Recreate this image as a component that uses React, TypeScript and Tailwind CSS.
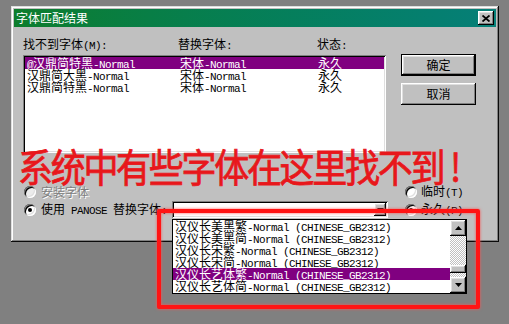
import React from "react";

function Mix({ text, className = "" }: { text: string; className?: string }) {
  const parts = text.match(/[\x00-\x7F]+|[^\x00-\x7F]+/g) || [];
  return (
    <span className={"whitespace-pre " + className}>
      {parts.map((p, i) =>
        /^[\x00-\x7F]+$/.test(p) ? (
          <span key={i} className="font-['Liberation_Mono',monospace] text-[11px] tracking-[-0.6px]">
            {p}
          </span>
        ) : (
          <span key={i}>{p}</span>
        )
      )}
    </span>
  );
}

function Radio({ checked, disabled }: { checked?: boolean; disabled?: boolean }) {
  return (
    <div
      className={
        "relative w-[12px] h-[12px] shrink-0 rounded-full shadow-[inset_1px_1px_#808080,inset_-1px_-1px_#ffffff,inset_2px_2px_#000000,inset_-2px_-2px_#dfdfdf] " +
        (disabled ? "bg-[#ececec]" : "bg-white")
      }
    >
      {checked && <div className="absolute left-[4px] top-[4px] w-[4px] h-[4px] rounded-full bg-black" />}
    </div>
  );
}

function Arrow({ up }: { up?: boolean }) {
  return (
    <svg width="7" height="4" viewBox="0 0 7 4">
      {up ? <polygon points="3.5,0 7,4 0,4" fill="#000" /> : <polygon points="0,0 7,0 3.5,4" fill="#000" />}
    </svg>
  );
}

const raised =
  "bg-[#c0c0c0] shadow-[inset_-1px_-1px_#000000,inset_1px_1px_#ffffff,inset_-2px_-2px_#808080,inset_2px_2px_#dfdfdf]";
const sunken =
  "shadow-[inset_1px_1px_#808080,inset_-1px_-1px_#ffffff,inset_2px_2px_#000000,inset_-2px_-2px_#dfdfdf]";

const listRows = [
  ["@汉鼎简特黑-Normal", "宋体-Normal", "永久"],
  ["汉鼎简大黑-Normal", "宋体-Normal", "永久"],
  ["汉鼎简特黑-Normal", "宋体-Normal", "永久"],
];

const dropItems = [
  "汉仪长美黑繁-Normal (CHINESE_GB2312)",
  "汉仪长美黑简-Normal (CHINESE_GB2312)",
  "汉仪长宋繁-Normal (CHINESE_GB2312)",
  "汉仪长宋简-Normal (CHINESE_GB2312)",
  "汉仪长艺体繁-Normal (CHINESE_GB2312)",
  "汉仪长艺体简-Normal (CHINESE_GB2312)",
];

export default function App() {
  return (
    <div className="relative w-[509px] h-[324px] overflow-hidden bg-[#808080] pt-[6px] pl-[11px] font-['Noto_Sans_CJK_SC','Noto_Sans',sans-serif] text-[12px] leading-[12px] text-black">
      {/* dialog */}
      <div className="w-[488px] h-[236px] bg-[#c0c0c0] p-[3px] flex flex-col shadow-[inset_-1px_-1px_#0a0a0a,inset_1px_1px_#dfdfdf,inset_-2px_-2px_#808080,inset_2px_2px_#ffffff]">
        {/* title bar */}
        <div className="h-[18px] shrink-0 flex items-center justify-between bg-gradient-to-r from-[#0d7d2c] to-[#067f78] pl-[2px] pr-[2px]">
          <span className="text-white leading-[12px]">字体匹配结果</span>
          <div className={"w-[16px] h-[14px] flex items-center justify-center " + raised}>
            <svg width="8" height="7" viewBox="0 0 8 7">
              <path d="M0.5 0.5 L7.5 6.5 M7.5 0.5 L0.5 6.5" stroke="#000" strokeWidth="1.8" />
            </svg>
          </div>
        </div>

        {/* top body */}
        <div className="flex pl-[9px] pt-[11px]">
          <div className="w-[363px] flex flex-col">
            <div className="flex h-[12px]">
              <div className="w-[155px]">
                <Mix text="找不到字体(M):" />
              </div>
              <div className="w-[139px]">
                <Mix text="替换字体:" />
              </div>
              <div>
                <Mix text="状态:" />
              </div>
            </div>
            <div className={"mt-[5px] h-[98px] bg-white p-[2px] " + sunken}>
              {listRows.map((r, i) => (
                <div
                  key={i}
                  className={"flex h-[12px] pl-[2px] " + (i === 0 ? "bg-[#800080] text-white" : "")}
                >
                  <div className="w-[153px]">
                    <Mix text={r[0]} />
                  </div>
                  <div className="w-[138px]">
                    <Mix text={r[1]} />
                  </div>
                  <div>
                    <Mix text={r[2]} />
                  </div>
                </div>
              ))}
            </div>
          </div>
          <div className="ml-[15px] pt-[16px] flex flex-col gap-[7px]">
            <div className="w-[75px] h-[22px] border border-black">
              <div className={"w-full h-full flex items-center justify-center " + raised}>确定</div>
            </div>
            <div className={"w-[75px] h-[22px] flex items-center justify-center " + raised}>取消</div>
          </div>
        </div>

        {/* bottom options */}
        <div className="grid grid-cols-[374px_100px] mt-[33px]">
          <div className="pl-[10px] flex flex-col gap-[3px]">
            <div className="h-[12px] flex items-center gap-[5px]">
              <Radio disabled />
              <span className="text-[#808080] [text-shadow:1px_1px_0_#ffffff]">安装字体</span>
            </div>
            <div className="h-[17px] flex items-center">
              <Radio checked />
              <div className="w-[136px] shrink-0 pl-[5px]">
                <Mix text="使用 PANOSE 替换字体:" />
              </div>
              <div className={"relative w-[216px] shrink-0 h-[17px] bg-white p-[2px] flex justify-end " + sunken}>
                <div className={"w-[12px] h-[13px] flex items-center justify-center " + raised}>
                  <Arrow />
                </div>
                {/* dropdown list */}
                <div className="absolute left-0 top-[18px] w-[295px] h-[75px] border border-black bg-white flex z-10">
                  <div className="flex-1 flex flex-col">
                    {dropItems.map((t, i) => (
                      <div
                        key={i}
                        className={"h-[12px] pl-[2px] " + (i === 4 ? "bg-[#800080] text-white" : "")}
                      >
                        <Mix text={t} />
                      </div>
                    ))}
                  </div>
                  <div className="w-[16px] flex flex-col">
                    <div className={"w-[16px] h-[16px] flex items-center justify-center " + raised}>
                      <Arrow up />
                    </div>
                    <div className="flex-1 flex flex-col bg-[repeating-conic-gradient(#c0c0c0_0%_25%,#ffffff_0%_50%)] [background-size:2px_2px]">
                      <div className="h-[29px]" />
                      <div className={"h-[8px] " + raised} />
                    </div>
                    <div className={"w-[16px] h-[16px] flex items-center justify-center " + raised}>
                      <Arrow />
                    </div>
                  </div>
                </div>
              </div>
            </div>
          </div>
          <div className="pl-[17px] flex flex-col gap-[3px]">
            <div className="h-[12px] flex items-center gap-[4px]">
              <Radio />
              <Mix text="临时(T)" />
            </div>
            <div className="h-[17px] flex items-center gap-[4px]">
              <Radio checked />
              <Mix text="永久(P)" />
            </div>
          </div>
        </div>
      </div>

      {/* annotation overlays */}
      <div className="absolute left-[18px] top-[143px] z-20 origin-top scale-y-110 text-[35px] leading-[40px] tracking-[-2.3px] text-[#e8171b] [-webkit-text-stroke:0.7px_#e8171b] whitespace-nowrap">
        系统中有些字体在这里找不到<span className="ml-[7px]">!</span>
      </div>
      <div className="absolute left-[157px] top-[209px] w-[323px] h-[100px] z-20 border-[4px] border-[#ff1414] rounded-[2px] shadow-[0_0_3px_#ff5050,inset_0_0_3px_#ff5050]" />
    </div>
  );
}
